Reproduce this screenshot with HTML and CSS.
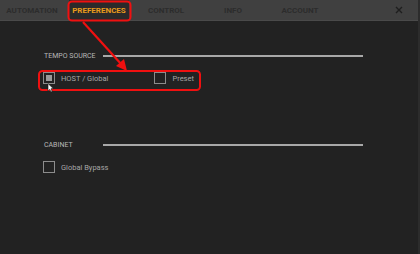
FILE: index.html
```html
<!DOCTYPE html>
<html>
<head>
<meta charset="utf-8">
<link rel="stylesheet" href="styles.css">
</head>
<body>
<div class="app">
  <div class="tabbar">
    <div class="tab">AUTOMATION</div>
    <div class="tab active">PREFERENCES</div>
    <div class="tab">CONTROL</div>
    <div class="tab">INFO</div>
    <div class="tab">ACCOUNT</div>
    <div class="close">
      <svg width="8" height="8" viewBox="0 0 8 8"><path d="M1 1 L7 7 M7 1 L1 7" stroke="#1e1e1e" stroke-width="1.4"/></svg>
    </div>
  </div>
  <div class="content">
    <div class="section tempo">
      <div class="head"><span class="label">TEMPO SOURCE</span><span class="rule"></span></div>
      <div class="row">
        <label class="opt"><span class="box checked"></span><span class="txt">HOST / Global</span></label>
        <label class="opt preset"><span class="box"></span><span class="txt">Preset</span></label>
      </div>
    </div>
    <div class="section cabinet">
      <div class="head"><span class="label">CABINET</span><span class="rule"></span></div>
      <div class="row">
        <label class="opt"><span class="box"></span><span class="txt">Global Bypass</span></label>
      </div>
    </div>
  </div>
  <svg class="annot" width="420" height="254" viewBox="0 0 420 254">
    <rect x="68.5" y="1.5" width="62" height="19" rx="3.5" fill="none" stroke="#f01010" stroke-width="2"/>
    <rect x="39" y="71" width="161" height="19" rx="3.5" fill="none" stroke="#f01010" stroke-width="2"/>
    <path d="M83 22 L122 65" stroke="#f01010" stroke-width="2.2" fill="none"/>
    <path d="M127 71 L116 66 L124 59 Z" fill="#f01010"/>
    <path d="M48 83.5 L48 91 L49.8 89.4 L51 92 L52.2 91.4 L51 88.8 L53.3 88.6 Z" fill="#fff" stroke="#111" stroke-width="0.6"/>
  </svg>
</div>
</body>
</html>
```

FILE: styles.css
```css
html, body {
  margin: 0;
  padding: 0;
  background: #222222;
}
.app {
  position: relative;
  width: 420px;
  height: 254px;
  overflow: hidden;
  background: #222222;
  font-family: Roboto, "Liberation Sans", sans-serif;
  border-right: 2px solid #2c2c2c;
  box-sizing: border-box;
}
.tabbar {
  display: flex;
  align-items: stretch;
  height: 20px;
  background: #404040;
  border-bottom: 1px solid #4a4a4a;
  padding-left: 2px;
  gap: 7px;
}
.tab {
  width: 60px;
  display: flex;
  align-items: center;
  justify-content: center;
  font-size: 8px;
  font-weight: 700;
  color: #2c2c2c;
}
.tab.active {
  background: #2a2a2a;
  color: #e89a1c;
}
.close {
  margin-left: auto;
  width: 20px;
  display: flex;
  align-items: center;
  justify-content: center;
  margin-right: 9px;
}
.content {
  padding: 28px 55px 0 44px;
}
.section .head {
  display: grid;
  grid-template-columns: 59px 1fr;
  align-items: center;
  height: 14px;
}
.label {
  font-size: 7px;
  color: #b8b8b8;
}
.rule {
  height: 1.5px;
  background: #a8a8a8;
}
.row {
  display: flex;
  align-items: center;
  height: 12px;
  margin-top: 9px;
  margin-left: -1px;
}
.opt {
  display: flex;
  align-items: center;
  gap: 6px;
}
.preset {
  margin-left: 46px;
}
.box {
  width: 10px;
  height: 10px;
  border: 1.5px solid #8c8c8c;
  box-sizing: content-box;
  position: relative;
}
.box.checked::after {
  content: "";
  position: absolute;
  left: 2px;
  top: 2px;
  width: 6px;
  height: 6px;
  background: #9a9a9a;
}
.txt {
  font-size: 7.5px;
  color: #a6a6a6;
}
.cabinet {
  margin-top: 54px;
}
.annot {
  position: absolute;
  left: 0;
  top: 0;
  pointer-events: none;
}
```
